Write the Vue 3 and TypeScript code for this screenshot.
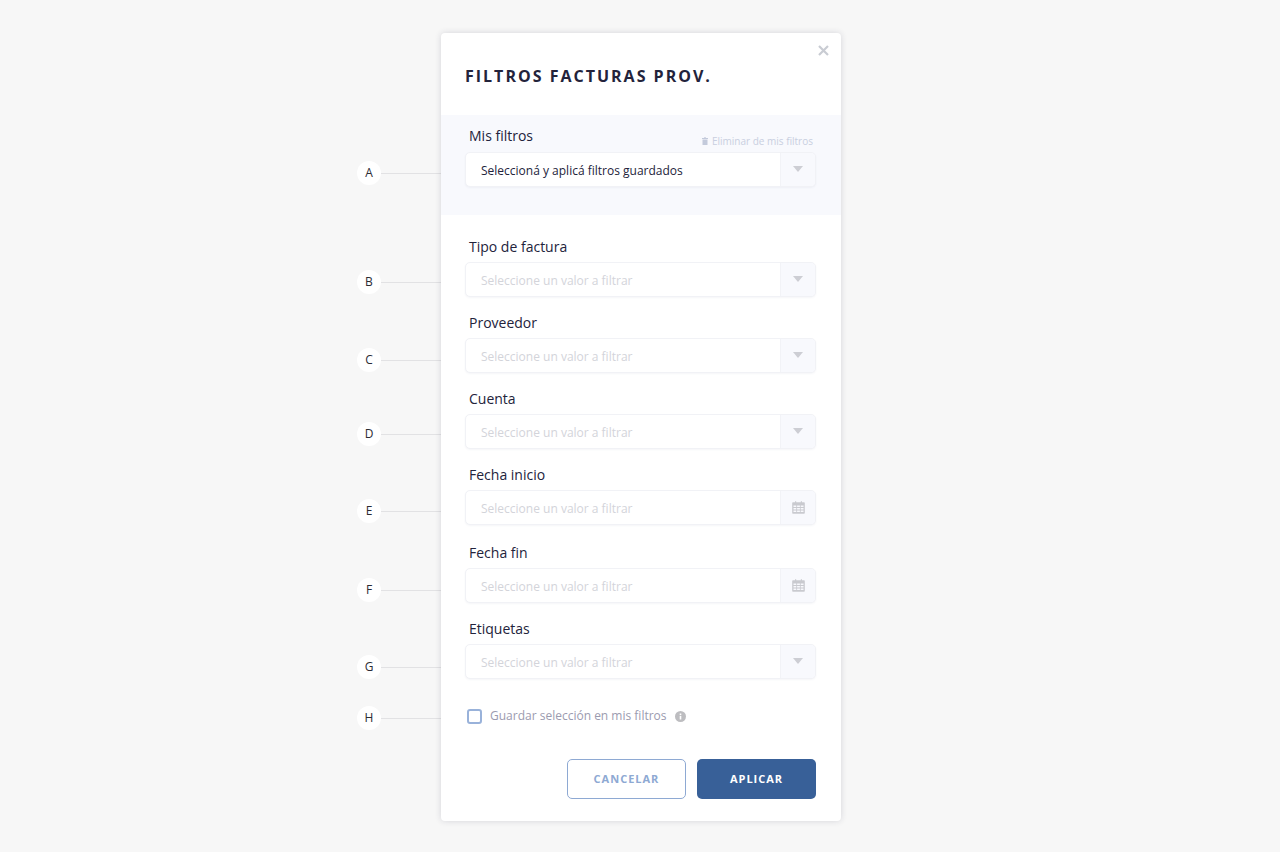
<script setup lang="ts">
interface Field { label: string; icon: 'caret' | 'calendar'; wide?: boolean }
const fields: Field[] = [
  { label: 'Tipo de factura', icon: 'caret' },
  { label: 'Proveedor', icon: 'caret' },
  { label: 'Cuenta', icon: 'caret' },
  { label: 'Fecha inicio', icon: 'calendar', wide: true },
  { label: 'Fecha fin', icon: 'calendar' },
  { label: 'Etiquetas', icon: 'caret' },
]
const marks = [
  { letter: 'A', y: 173 },
  { letter: 'B', y: 282 },
  { letter: 'C', y: 360 },
  { letter: 'D', y: 434 },
  { letter: 'E', y: 511 },
  { letter: 'F', y: 590 },
  { letter: 'G', y: 667 },
  { letter: 'H', y: 718 },
]
</script>

<template>
  <div class="stage">
    <div v-for="m in marks" :key="m.letter" class="mark" :style="{ top: m.y - 12 + 'px' }">
      <span class="dot">{{ m.letter }}</span>
      <span class="line"></span>
    </div>

    <section class="modal">
      <svg class="close" width="11" height="11" viewBox="0 0 11 11">
        <path d="M1 1 L10 10 M10 1 L1 10" stroke="#c9ccd3" stroke-width="2.2" fill="none" />
      </svg>
      <h1 class="title">FILTROS FACTURAS PROV.</h1>

      <div class="band">
        <div class="band-head">
          <label class="label">Mis filtros</label>
          <span class="remove">
            <svg width="6" height="8" viewBox="0 0 6 8">
              <path d="M0 1h2l.3-.7h1.400L4 1h2v1H0zM.5 2.500h5V8h-5z" fill="#c3cadb" />
            </svg>
            Eliminar de mis filtros
          </span>
        </div>
        <div class="select">
          <span class="value">Seleccioná y aplicá filtros guardados</span>
          <span class="addon"><i class="caret"></i></span>
        </div>
      </div>

      <div class="fields">
        <div v-for="f in fields" :key="f.label" class="field" :class="{ wide: f.wide }">
          <label class="label">{{ f.label }}</label>
          <div class="select">
            <span class="placeholder">Seleccione un valor a filtrar</span>
            <span class="addon">
              <i v-if="f.icon === 'caret'" class="caret"></i>
              <svg v-else width="13" height="13" viewBox="0 0 13 13">
                <path
                  fill="#c9cacf"
                  fill-rule="evenodd"
                  d="M1 1.200h2V.3h1.200v.9h4.600V.3H10v.9h2a.8.8 0 0 1 .8.8v10a.8.8 0 0 1-.8.8H1a.8.8 0 0 1-.8-.8V2a.8.8 0 0 1 .8-.8zM1.500 4.400v1.700h2.800V4.400zm3.600 0v1.700h2.800V4.400zm3.600 0v1.700h2.800V4.400zM1.500 6.900v1.700h2.800V6.900zm3.600 0v1.700h2.800V6.900zm3.600 0v1.700h2.800V6.900zM1.500 9.400v1.700h2.800V9.400zm3.600 0v1.700h2.800V9.400zm3.600 0v1.700h2.800V9.400z"
                />
              </svg>
            </span>
          </div>
        </div>
      </div>

      <div class="save">
        <span class="box"></span>
        <span class="save-text">Guardar selección en mis filtros</span>
        <svg width="11" height="11" viewBox="0 0 11 11">
          <circle cx="5.500" cy="5.500" r="5.500" fill="#bdbdc0" />
          <rect x="4.700" y="4.800" width="1.600" height="3.700" fill="#fff" />
          <rect x="4.700" y="2.500" width="1.600" height="1.500" fill="#fff" />
        </svg>
      </div>

      <div class="actions">
        <button class="btn ghost" type="button">CANCELAR</button>
        <button class="btn solid" type="button">APLICAR</button>
      </div>
    </section>
  </div>
</template>

<style>
html, body { margin: 0; background: #f7f7f7; }
</style>

<style scoped>
.stage {
  position: relative;
  height: 852px;
  box-sizing: border-box;
  padding: 33px 0 0 441px;
  background: #f7f7f7;
  font-family: "Open Sans", sans-serif;
  color: #23233b;
}
.mark {
  position: absolute;
  left: 357px;
  display: flex;
  align-items: center;
}
.dot {
  width: 24px;
  height: 24px;
  border-radius: 50%;
  background: #fff;
  display: flex;
  align-items: center;
  justify-content: center;
  font-size: 12px;
  line-height: 22px;
  box-sizing: border-box;
  color: #2b2b33;
}
.line {
  width: 60px;
  height: 1px;
  background: #e2e2e4;
}
.modal {
  position: relative;
  width: 400px;
  height: 788px;
  background: #fff;
  border-radius: 4px;
  box-shadow: 0 0 6px rgba(40, 40, 70, 0.16);
}
.close {
  position: absolute;
  top: 12px;
  right: 12px;
}
.title {
  margin: 0;
  padding: 32px 24px 0;
  height: 82px;
  box-sizing: border-box;
  font-size: 16px;
  line-height: 22px;
  font-weight: 700;
  letter-spacing: 2px;
  color: #23233b;
}
.band {
  height: 100px;
  box-sizing: border-box;
  padding: 11px 25px 0 24px;
  background: #f8f9fd;
}
.band-head {
  display: flex;
  justify-content: space-between;
  align-items: flex-end;
  margin-bottom: 6px;
  padding-right: 3px;
}
.label {
  display: block;
  padding-left: 4px;
  font-size: 14px;
  line-height: 20px;
  color: #23233b;
}
.remove {
  display: flex;
  align-items: center;
  gap: 4px;
  font-size: 10px;
  line-height: 14px;
  color: #c8cfe0;
  transform: translateY(2px);
}
.fields {
  padding: 22px 25px 0 24px;
}
.field {
  margin-bottom: 16px;
}
.field.wide {
  margin-bottom: 18px;
}
.field:last-child {
  margin-bottom: 0;
}
.field .label {
  margin-bottom: 5px;
}
.select {
  display: flex;
  height: 35px;
  box-sizing: border-box;
  border: 1px solid #f1f2f6;
  border-radius: 5px;
  background: #fff;
  overflow: hidden;
  box-shadow: 0 1px 2px rgba(60, 70, 110, 0.05);
}
.value,
.placeholder {
  flex: 1;
  padding-left: 15px;
  font-size: 12px;
  line-height: 35px;
}
.value { color: #23233b; }
.placeholder { color: #d3d4da; }
.addon {
  width: 34px;
  display: flex;
  align-items: center;
  justify-content: center;
  background: #f8f9fd;
  border-left: 1px solid #f2f3f7;
}
.caret {
  width: 0;
  height: 0;
  margin-top: -2px;
  margin-right: 1px;
  border-left: 5px solid transparent;
  border-right: 5px solid transparent;
  border-top: 6px solid #cdced4;
}
.save {
  display: flex;
  align-items: center;
  padding-left: 26px;
  margin-top: 27px;
  height: 20px;
}
.box {
  width: 15px;
  height: 15px;
  box-sizing: border-box;
  border: 2px solid #99b2da;
  border-radius: 3px;
  background: #fff;
  margin-right: 8px;
}
.save-text {
  font-size: 12px;
  line-height: 20px;
  color: #9b9baf;
  margin-right: 8px;
}
.actions {
  display: flex;
  justify-content: flex-end;
  gap: 11px;
  padding-right: 25px;
  margin-top: 33px;
}
.btn {
  width: 119px;
  height: 40px;
  border-radius: 5px;
  font-family: "Open Sans", sans-serif;
  font-size: 11px;
  font-weight: 700;
  letter-spacing: 1px;
  padding: 0 0 2px;
  box-sizing: border-box;
}
.ghost {
  background: #fff;
  border: 1px solid #8ea9d3;
  color: #8ea9d3;
}
.solid {
  background: #386098;
  border: none;
  color: #fff;
}
</style>
